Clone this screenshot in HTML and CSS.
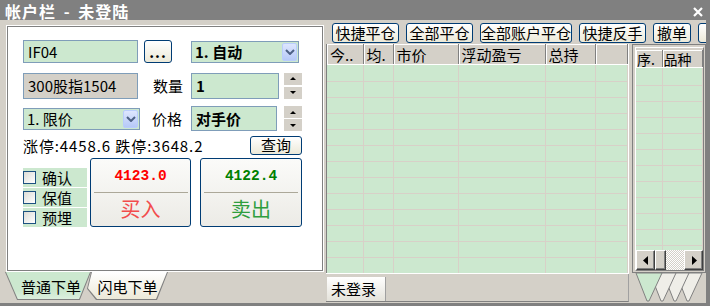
FILE: index.html
```html
<!DOCTYPE html>
<html lang="zh-CN">
<head>
  <meta charset="UTF-8">
  <title>帐户栏 - 未登陆</title>
  <link rel="stylesheet" href="styles.css">
</head>
<body>
<div class="window">
  <div class="titlebar">
    <span class="title">帐户栏 - 未登陆</span>
    <svg class="close" width="10" height="10" viewBox="0 0 10 10"><path d="M1 1L9 9M9 1L1 9" stroke="#fff" stroke-width="2.2"/></svg>
  </div>

  <div class="main">
    <div class="left">
      <div class="panel">
        <div class="row row-1">
          <div class="field code">IF04</div>
          <button class="btn dots">...</button>
          <div class="select mode">
            <span>1. 自动</span>
            <span class="arrow"><svg width="10" height="6" viewBox="0 0 10 6"><path d="M1 1L5 5L9 1" fill="none" stroke="#4d6185" stroke-width="2"/></svg></span>
          </div>
        </div>

        <div class="row row-2">
          <div class="field name">300股指1504</div>
          <span class="label qty-label">数量</span>
          <div class="field qty">1</div>
          <div class="spin"><span class="up"></span><span class="down"></span></div>
        </div>

        <div class="row row-3">
          <div class="select price-type">
            <span>1. 限价</span>
            <span class="arrow"><svg width="10" height="6" viewBox="0 0 10 6"><path d="M1 1L5 5L9 1" fill="none" stroke="#4d6185" stroke-width="2"/></svg></span>
          </div>
          <span class="label price-label">价格</span>
          <div class="field price-input">对手价</div>
          <div class="spin"><span class="up"></span><span class="down"></span></div>
        </div>

        <div class="row row-4">
          <span class="limits">涨停:4458.6 跌停:3648.2</span>
          <button class="btn query">查询</button>
        </div>

        <div class="row row-5">
          <div class="checks">
            <label class="check"><span class="box"></span>确认</label>
            <label class="check"><span class="box"></span>保值</label>
            <label class="check"><span class="box"></span>预埋</label>
          </div>
          <button class="trade buy">
            <span class="quote">4123.0</span>
            <span class="divider"></span>
            <span class="action">买入</span>
          </button>
          <button class="trade sell">
            <span class="quote">4122.4</span>
            <span class="divider"></span>
            <span class="action">卖出</span>
          </button>
        </div>
      </div>

      <div class="tabs">
        <div class="tab active"><span>普通下单</span></div>
        <div class="tab second"><span>闪电下单</span></div>
      </div>
    </div>

    <div class="right">
      <div class="toolbar">
        <button class="btn tool w4">快捷平仓</button>
        <button class="btn tool w4">全部平仓</button>
        <button class="btn tool w6">全部账户平仓</button>
        <button class="btn tool w4">快捷反手</button>
        <button class="btn tool w2">撤单</button>
        <button class="btn tool w2"></button>
      </div>

      <div class="content">
        <div class="positions">
          <div class="grid">
            <table>
              <colgroup>
                <col style="width:36px"><col style="width:30px"><col style="width:65px">
                <col style="width:87px"><col style="width:50px"><col>
              </colgroup>
              <thead>
                <tr><th>今..</th><th>均.</th><th>市价</th><th>浮动盈亏</th><th>总持</th><th></th></tr>
              </thead>
              <tbody>
                <tr class="first"><td></td><td></td><td></td><td></td><td></td><td></td></tr>
                <tr><td></td><td></td><td></td><td></td><td></td><td></td></tr>
                <tr><td></td><td></td><td></td><td></td><td></td><td></td></tr>
                <tr><td></td><td></td><td></td><td></td><td></td><td></td></tr>
                <tr><td></td><td></td><td></td><td></td><td></td><td></td></tr>
                <tr><td></td><td></td><td></td><td></td><td></td><td></td></tr>
                <tr><td></td><td></td><td></td><td></td><td></td><td></td></tr>
                <tr><td></td><td></td><td></td><td></td><td></td><td></td></tr>
                <tr><td></td><td></td><td></td><td></td><td></td><td></td></tr>
                <tr><td></td><td></td><td></td><td></td><td></td><td></td></tr>
                <tr><td></td><td></td><td></td><td></td><td></td><td></td></tr>
                <tr><td></td><td></td><td></td><td></td><td></td><td></td></tr>
                <tr><td></td><td></td><td></td><td></td><td></td><td></td></tr>
              </tbody>
            </table>
          </div>
          <div class="statusbar">
            <div class="status-inner"><span class="status-tab">未登录</span></div>
          </div>
        </div>

        <div class="side">
          <div class="side-frame">
            <div class="side-inner">
              <div class="side-list">
                <table class="side-table">
                  <colgroup><col style="width:26px"><col></colgroup>
                  <thead><tr><th>序.</th><th>品种</th></tr></thead>
                  <tbody>
                    <tr class="first"><td></td><td></td></tr>
                    <tr><td></td><td></td></tr>
                    <tr><td></td><td></td></tr>
                    <tr><td></td><td></td></tr>
                    <tr><td></td><td></td></tr>
                    <tr><td></td><td></td></tr>
                    <tr><td></td><td></td></tr>
                    <tr><td></td><td></td></tr>
                    <tr><td></td><td></td></tr>
                    <tr><td></td><td></td></tr>
                    <tr><td></td><td></td></tr>
                    <tr><td></td><td></td></tr>
                  </tbody>
                </table>
              </div>
              <div class="scrollbar">
                <span class="sb-btn"><svg width="6" height="9" viewBox="0 0 6 9"><path d="M5 0V9L0 4.5Z" fill="#000"/></svg></span>
                <span class="sb-thumb"></span>
                <span class="sb-track"></span>
                <span class="sb-btn"><svg width="6" height="9" viewBox="0 0 6 9"><path d="M1 0V9L6 4.5Z" fill="#000"/></svg></span>
              </div>
            </div>
          </div>
          <svg class="side-tabs" width="74" height="30" viewBox="0 0 74 30">
            <path d="M44 0H70L57 28H55Z" fill="#efeee8" stroke="#808080"/>
            <path d="M31 0H57L44 28H42Z" fill="#efeee8" stroke="#808080"/>
            <path d="M18 0H44L31 28H29Z" fill="#efeee8" stroke="#808080"/>
            <path d="M4 0H30L17 28H15Z" fill="#cce8cf" stroke="#808080"/>
          </svg>
        </div>
      </div>
    </div>
  </div>
</div>
</body>
</html>
```

FILE: styles.css
```css
* {
  box-sizing: border-box;
}
body {
  margin: 0;
  font-family: "Noto Sans CJK SC", sans-serif;
  font-size: 15px;
  color: #000;
  background: #d4d0c8;
}
button {
  font-family: inherit;
  font-size: 15px;
  color: #000;
  padding: 0;
  margin: 0;
}
.window {
  width: 710px;
  height: 306px;
  border-right: 4px solid #808080;
  border-bottom: 3px solid #808080;
  display: flex;
  flex-direction: column;
  overflow: hidden;
}
.titlebar {
  height: 20px;
  flex-shrink: 0;
  background: #808080;
  color: #fff;
  display: flex;
  align-items: flex-start;
  justify-content: space-between;
  padding: 0 3px 0 5px;
}
.title {
  font-size: 16px;
  font-weight: bold;
  line-height: 23px;
  letter-spacing: 1px;
  word-spacing: 3px;
  white-space: nowrap;
}
.close {
  margin-top: 7px;
}
.main {
  flex: 1;
  display: flex;
}

/* left order panel */
.left {
  width: 325px;
  display: flex;
  flex-direction: column;
}
.panel {
  margin: 6px 0 0 7px;
  width: 316px;
  height: 245px;
  background: #fff;
  border: 1px solid #808080;
  box-shadow: 0 0 0 1px #fff;
  padding: 13px 0 0 15px;
}
.row {
  display: flex;
  align-items: center;
  width: 279px;
}
.field {
  border: 1px solid #7f9db9;
  background: #cce8cf;
  padding-left: 4px;
  display: flex;
  align-items: center;
  white-space: nowrap;
}
.code {
  width: 115px;
  height: 23px;
}
.dots {
  margin-left: 6px;
  width: 28px;
  height: 23px;
  border: 1px solid #003c74;
  border-radius: 3px;
  background: linear-gradient(#fff, #ece9d8);
  line-height: 18px;
  letter-spacing: 1px;
  font-weight: bold;
}
.select {
  border: 1px solid #7f9db9;
  background: #cce8cf;
  height: 22px;
  display: flex;
  align-items: center;
  justify-content: space-between;
  padding: 1px 1px 1px 3px;
}
.mode {
  margin-left: 19px;
  width: 108px;
  font-weight: bold;
}
.arrow {
  width: 15px;
  height: 18px;
  border: 1px solid #b9cdfc;
  border-radius: 2px;
  background: linear-gradient(#dde6fe, #b6c9f7);
  display: flex;
  align-items: center;
  justify-content: center;
}
.row-2 {
  margin-top: 9px;
  height: 27px;
}
.name {
  width: 115px;
  height: 26px;
  background: #d4d0c8;
}
.label {
  width: 30px;
  white-space: nowrap;
}
.qty-label {
  margin-left: 15px;
}
.qty {
  margin-left: 8px;
  width: 88px;
  height: 26px;
  font-weight: bold;
}
.spin {
  margin-left: 5px;
  width: 18px;
  height: 26px;
  display: flex;
  flex-direction: column;
  justify-content: space-between;
}
.spin span {
  height: 12px;
  background: #d4d0c8;
  display: flex;
  align-items: center;
  justify-content: center;
}
.spin .up::after {
  content: "";
  border: 3px solid transparent;
  border-bottom: 3px solid #000;
  border-top: 0;
}
.spin .down::after {
  content: "";
  border: 3px solid transparent;
  border-top: 3px solid #000;
  border-bottom: 0;
}
.row-3 {
  margin-top: 7px;
  height: 25px;
}
.price-type {
  width: 117px;
}
.price-label {
  margin-left: 12px;
}
.price-input {
  margin-left: 9px;
  width: 86px;
  height: 25px;
  font-weight: bold;
}
.row-3 .spin {
  margin-left: 7px;
  height: 25px;
}
.row-4 {
  margin-top: 4px;
  height: 20px;
  justify-content: space-between;
}
.limits {
  letter-spacing: 0.9px;
  white-space: nowrap;
}
.btn {
  border: 1px solid #003c74;
  border-radius: 3px;
  background: linear-gradient(#fff, #ece9d8);
}
.query {
  width: 52px;
  height: 19px;
  line-height: 16px;
}
.row-5 {
  margin-top: 3px;
  align-items: flex-start;
  height: 69px;
}
.checks {
  margin-top: 10px;
  width: 64px;
  display: flex;
  flex-direction: column;
  gap: 1px;
}
.check {
  height: 19px;
  background: #cce8cf;
  display: flex;
  align-items: center;
  white-space: nowrap;
}
.box {
  width: 13px;
  height: 13px;
  border: 1px solid #1c5180;
  background: linear-gradient(135deg, #dcdcd7, #fff);
  margin-right: 6px;
}
.trade {
  height: 69px;
  border: 1px solid #003c74;
  border-radius: 3px;
  background: linear-gradient(#fbfbf9, #ecebe6);
  display: flex;
  flex-direction: column;
  align-items: center;
  padding: 7px 4px 0;
}
.buy {
  margin-left: 3px;
  width: 101px;
}
.sell {
  margin-left: 9px;
  width: 102px;
}
.quote {
  font-family: "Liberation Mono", monospace;
  font-weight: bold;
  font-size: 14.5px;
  line-height: 20px;
}
.divider {
  margin-top: 6px;
  width: 94px;
  height: 1px;
  background: #aca899;
}
.action {
  margin-top: 4px;
  font-size: 20px;
  line-height: 24px;
}
.buy .quote {
  color: #ff0000;
}
.buy .action {
  color: #f24c4c;
}
.sell .quote {
  color: #008000;
}
.sell .action {
  color: #2e9e3e;
}

/* bottom tabs of the order panel */
.tabs {
  margin-top: 1px;
  height: 28px;
  display: flex;
  padding-left: 5px;
}
.tab {
  position: relative;
  height: 28px;
  display: flex;
  align-items: center;
  justify-content: center;
  background: #808080;
}
.tab::before {
  content: "";
  position: absolute;
  top: 0;
  left: 1px;
  right: 1px;
  bottom: 1px;
}
.tab span {
  position: relative;
}
.active {
  width: 86px;
  padding-left: 6px;
  z-index: 1;
  clip-path: polygon(0 0, 100% 0, 87% 100%, 14% 100%);
}
.active::before {
  background: linear-gradient(#cce8cf 70%, #dcefde);
  clip-path: polygon(0 0, 100% 0, 87% 100%, 14% 100%);
}
.second {
  width: 81px;
  margin-left: -4px;
  clip-path: polygon(4px 0, 100% 0, calc(100% - 11px) 100%, 9px 100%, 0 60%);
}
.second::before {
  background: linear-gradient(#fff, #ece9d8);
  clip-path: polygon(4px 0, 100% 0, calc(100% - 11px) 100%, 9px 100%, 0 60%);
}

/* right side */
.right {
  width: 381px;
  display: flex;
  flex-direction: column;
}
.toolbar {
  height: 24px;
  padding: 3px 0 0 7px;
  display: flex;
  gap: 7px;
  overflow: hidden;
}
.tool {
  height: 20px;
  line-height: 18px;
  flex-shrink: 0;
}
.w4 {
  width: 67px;
}
.w6 {
  width: 92px;
}
.w2 {
  width: 38px;
}
.content {
  flex: 1;
  display: flex;
}
.positions {
  margin-left: 1px;
  width: 303px;
  display: flex;
  flex-direction: column;
}
.grid {
  height: 229px;
  overflow: hidden;
  border-left: 1px solid #808080;
  background: #cce8cf;
  border-right: 1px solid #fff;
}
table {
  border-collapse: collapse;
  table-layout: fixed;
  width: 100%;
}
th {
  height: 20px;
  background: #d4d0c8;
  font-weight: normal;
  text-align: left;
  padding: 0 0 0 3px;
  line-height: 18px;
  border-top: 1px solid #fff;
  border-right: 1px solid #808080;
  border-bottom: 1px solid #fff;
  box-shadow: inset 1px 0 0 #fff;
  white-space: nowrap;
}
td {
  height: 16px;
  padding: 0;
  background: #cce8cf;
  border-right: 1px solid #d8d0c8;
  border-bottom: 1px solid #d8d0c8;
}
tr.first td {
  height: 17px;
}
.statusbar {
  height: 30px;
  border-top: 1px solid #fff;
}
.status-inner {
  height: 28px;
  padding: 3px 0 0 1px;
  border-bottom: 1px solid #808080;
  border-right: 1px solid #a0a0a0;
}
.status-tab {
  display: inline-block;
  width: 59px;
  height: 24px;
  line-height: 24px;
  padding-left: 4px;
  background: linear-gradient(#fff, #e4e2da);
  border-right: 1px solid #a0a0a0;
}
.side {
  margin-left: 3px;
  width: 74px;
  display: flex;
  flex-direction: column;
}
.side-frame {
  height: 229px;
  border: 1px solid #808080;
  padding: 2px 1px 1px 2px;
}
.side-inner {
  height: 100%;
  border: 1px solid;
  border-color: #fff #808080 #808080 #fff;
  display: flex;
  flex-direction: column;
  overflow: hidden;
}
.side-list {
  flex: 1;
  overflow: hidden;
  padding-top: 2px;
}
.side-table th {
  height: 17px;
  font-size: 14px;
  line-height: 16px;
  padding-left: 1px;
}
.side-table tr.first td {
  height: 18px;
}
.scrollbar {
  height: 20px;
  flex-shrink: 0;
  display: flex;
  background: #d4d0c8;
}
.sb-btn,
.sb-thumb {
  background: #d4d0c8;
  border: 1px solid;
  border-color: #fff #404040 #404040 #fff;
  box-shadow: inset -1px -1px 0 #808080;
  display: flex;
  align-items: center;
  justify-content: center;
}
.sb-btn {
  width: 19px;
}
.sb-thumb {
  width: 11px;
}
.sb-track {
  flex: 1;
  background-color: #fff;
  background-image: repeating-conic-gradient(#d4d0c8 0 25%, #fff 0 50%);
  background-size: 2px 2px;
}
.side-tabs {
  display: block;
}
```
